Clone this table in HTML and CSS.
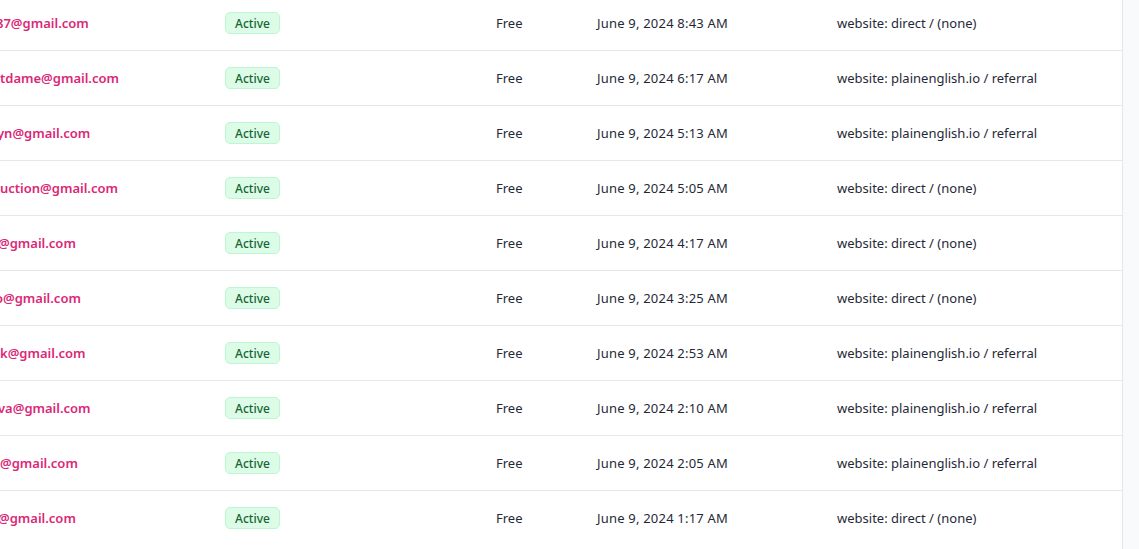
FILE: index.html
```html
<!DOCTYPE html>
<html lang="en">
<head>
  <meta charset="UTF-8" />
  <meta name="viewport" content="width=device-width, initial-scale=1.0" />
  <title>Subscribers</title>
  <link rel="stylesheet" href="styles.css">
</head>
<body>
  <div class="page">
    <div class="panel">
      <table class="subs">
        <colgroup>
          <col class="c-email">
          <col class="c-status">
          <col class="c-plan">
          <col class="c-date">
          <col class="c-source">
        </colgroup>
        <tbody>
          <tr>
            <td class="email"><span class="cut c4">87@gmail.com</span></td>
            <td><span class="badge">Active</span></td>
            <td>Free</td>
            <td class="date">June 9, 2024 8:43 AM</td>
            <td>website: direct / (none)</td>
          </tr>
          <tr>
            <td class="email"><span class="cut">tdame@gmail.com</span></td>
            <td><span class="badge">Active</span></td>
            <td>Free</td>
            <td class="date">June 9, 2024 6:17 AM</td>
            <td>website: plainenglish.io / referral</td>
          </tr>
          <tr>
            <td class="email"><span class="cut c3">yn@gmail.com</span></td>
            <td><span class="badge">Active</span></td>
            <td>Free</td>
            <td class="date">June 9, 2024 5:13 AM</td>
            <td>website: plainenglish.io / referral</td>
          </tr>
          <tr>
            <td class="email"><span class="cut">uction@gmail.com</span></td>
            <td><span class="badge">Active</span></td>
            <td>Free</td>
            <td class="date">June 9, 2024 5:05 AM</td>
            <td>website: direct / (none)</td>
          </tr>
          <tr>
            <td class="email"><span class="cut c2">@gmail.com</span></td>
            <td><span class="badge">Active</span></td>
            <td>Free</td>
            <td class="date">June 9, 2024 4:17 AM</td>
            <td>website: direct / (none)</td>
          </tr>
          <tr>
            <td class="email"><span class="cut c5">o@gmail.com</span></td>
            <td><span class="badge">Active</span></td>
            <td>Free</td>
            <td class="date">June 9, 2024 3:25 AM</td>
            <td>website: direct / (none)</td>
          </tr>
          <tr>
            <td class="email"><span class="cut">k@gmail.com</span></td>
            <td><span class="badge">Active</span></td>
            <td>Free</td>
            <td class="date">June 9, 2024 2:53 AM</td>
            <td>website: plainenglish.io / referral</td>
          </tr>
          <tr>
            <td class="email"><span class="cut c2">va@gmail.com</span></td>
            <td><span class="badge">Active</span></td>
            <td>Free</td>
            <td class="date">June 9, 2024 2:10 AM</td>
            <td>website: plainenglish.io / referral</td>
          </tr>
          <tr>
            <td class="email"><span class="cut">@gmail.com</span></td>
            <td><span class="badge">Active</span></td>
            <td>Free</td>
            <td class="date">June 9, 2024 2:05 AM</td>
            <td>website: plainenglish.io / referral</td>
          </tr>
          <tr>
            <td class="email"><span class="cut c2">@gmail.com</span></td>
            <td><span class="badge">Active</span></td>
            <td>Free</td>
            <td class="date">June 9, 2024 1:17 AM</td>
            <td>website: direct / (none)</td>
          </tr>
        </tbody>
      </table>
    </div>
  </div>
</body>
</html>
```

FILE: styles.css
```css
html, body {
  margin: 0;
  height: 100%;
  overflow: hidden;
}
body {
  font-family: "Noto Sans", "Open Sans", sans-serif;
  font-size: 13px;
  color: #1f2937;
  background-color: #f9fafb;
}
.page {
  display: flex;
}
.panel {
  width: 1122px;
  min-height: 100vh;
  background-color: #fff;
  border-right: 1px solid #e5e7eb;
  overflow: hidden;
}
.subs {
  width: 100%;
  margin-top: -4px;
  border-collapse: collapse;
  table-layout: fixed;
}
.c-email { width: 225px; }
.c-status { width: 271px; }
.c-plan { width: 101px; }
.c-date { width: 240px; }
.subs td {
  height: 54px;
  padding: 0;
  border-bottom: 1px solid #e5e7eb;
  white-space: nowrap;
  vertical-align: middle;
}
.subs tr:last-child td {
  border-bottom: none;
}
.date {
  letter-spacing: 0.2px;
}
.email {
  color: #db2777;
  font-weight: 600;
  overflow: hidden;
}
.cut {
  display: inline-block;
}
.cut.c2 { margin-left: -2px; }
.cut.c3 { margin-left: -3px; }
.cut.c4 { margin-left: -4px; }
.cut.c5 { margin-left: -5px; }
.badge {
  display: inline-flex;
  align-items: center;
  justify-content: center;
  width: 53px;
  height: 20px;
  background-color: #dcfce7;
  border: 1px solid #bbf7d0;
  border-radius: 5px;
  color: #166534;
  font-size: 12px;
  font-weight: 500;
}
```
